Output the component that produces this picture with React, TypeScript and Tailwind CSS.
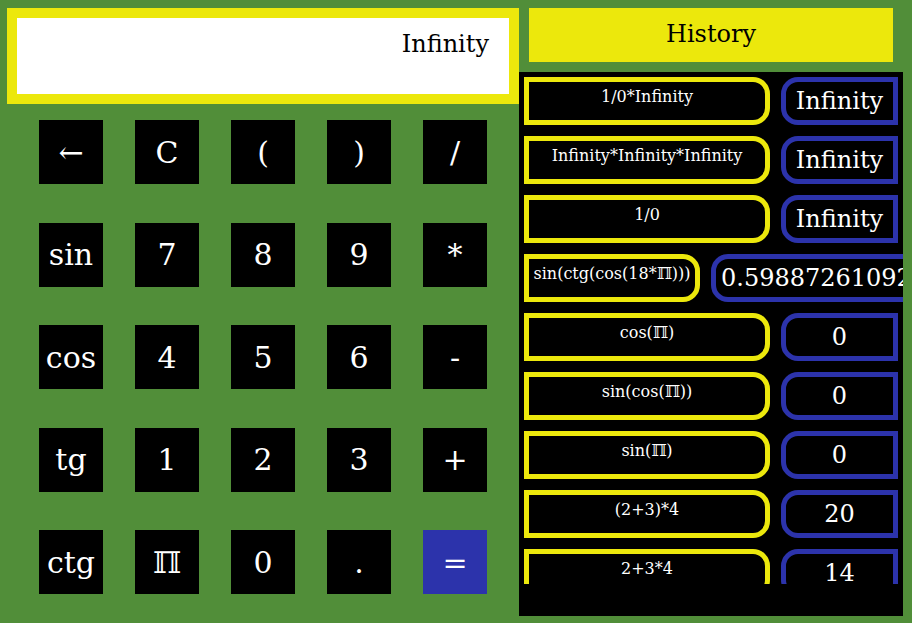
import React from "react";

const keys: string[][] = [
  ["←", "C", "(", ")", "/"],
  ["sin", "7", "8", "9", "*"],
  ["cos", "4", "5", "6", "-"],
  ["tg", "1", "2", "3", "+"],
  ["ctg", "ℿ", "0", ".", "="],
];

type Row = { expr: string; res: string; wide?: boolean };

const history: Row[] = [
  { expr: "1/0*Infinity", res: "Infinity" },
  { expr: "Infinity*Infinity*Infinity", res: "Infinity" },
  { expr: "1/0", res: "Infinity" },
  { expr: "sin(ctg(cos(18*ℿ)))", res: "0.5988726109271127", wide: true },
  { expr: "cos(ℿ)", res: "0" },
  { expr: "sin(cos(ℿ))", res: "0" },
  { expr: "sin(ℿ)", res: "0" },
  { expr: "(2+3)*4", res: "20" },
  { expr: "2+3*4", res: "14" },
];

export default function App() {
  return (
    <div className="w-[912px] h-[623px] bg-[#518e39] flex overflow-hidden font-['DejaVu_Serif',serif]">
      <div className="w-[519px] shrink-0 pl-[7px] pt-[8px] flex flex-col">
        <div className="h-[96px] border-[10px] border-[#ece80c] bg-white flex justify-end items-start pr-[20px] pt-[12px] text-[24px] text-black leading-[28px]">
          Infinity
        </div>
        <div className="mt-[16px] flex flex-col gap-y-[38.5px]">
          {keys.map((row, i) => (
            <div key={i} className="flex justify-evenly">
              {row.map((k) => (
                <div
                  key={k}
                  className={
                    k === "="
                      ? "w-[64px] h-[64px] bg-[#2c33ab] text-white text-[30px] flex items-center justify-center"
                      : "w-[64px] h-[64px] bg-black text-white text-[30px] flex items-center justify-center"
                  }
                >
                  {k}
                </div>
              ))}
            </div>
          ))}
        </div>
      </div>
      <div className="w-[384px] shrink-0 flex flex-col">
        <div className="mx-[10px] mt-[8px] h-[54px] bg-[#ece80c] flex items-center justify-center text-[24px] text-black leading-[28px] pb-[2px]">
          History
        </div>
        <div className="mt-[10px] h-[544px] bg-black pt-[5px] pl-[5px] overflow-hidden">
          <div className="h-[507px] overflow-hidden flex flex-col gap-[11px]">
            {history.map((r, i) => (
              <div key={i} className="flex gap-[11px] shrink-0">
                <div
                  className={
                    (r.wide ? "w-[176px]" : "w-[246px]") +
                    " h-[48px] shrink-0 border-[5px] border-[#ece80c] rounded-r-[17px] text-white text-[16px] text-center pt-[5px] leading-[19px] whitespace-nowrap"
                  }
                >
                  {r.expr}
                </div>
                {r.wide ? (
                  <div className="w-[280px] h-[48px] shrink-0 border-[5px] border-[#2c33ab] rounded-l-[17px] text-white text-[24px] flex items-center pl-[5px] whitespace-nowrap">
                    {r.res}
                  </div>
                ) : (
                  <div className="w-[117px] h-[48px] shrink-0 border-[5px] border-[#2c33ab] rounded-l-[17px] text-white text-[24px] flex items-center justify-center whitespace-nowrap">
                    {r.res}
                  </div>
                )}
              </div>
            ))}
          </div>
        </div>
      </div>
    </div>
  );
}
